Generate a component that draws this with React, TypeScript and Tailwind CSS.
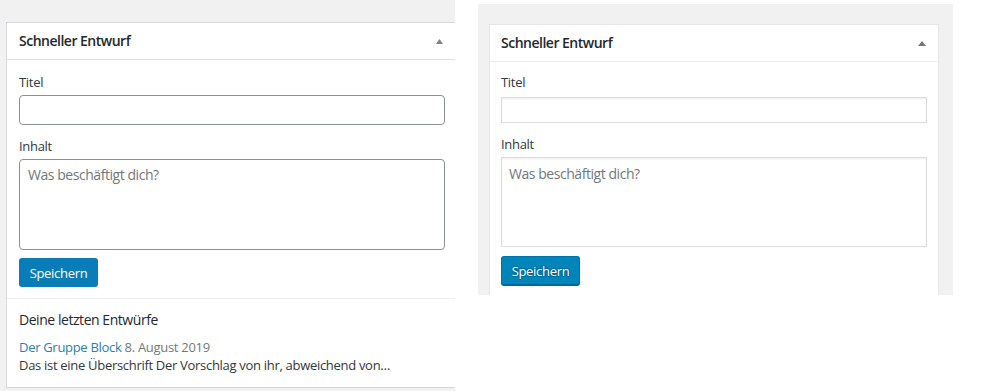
import React from "react";

function Triangle({ w, h, color }: { w: number; h: number; color: string }) {
  return (
    <svg width={w} height={h} viewBox={`0 0 ${w} ${h}`} className="block">
      <polygon points={`0,${h} ${w},${h} ${w / 2},0`} fill={color} />
    </svg>
  );
}

export default function App() {
  return (
    <div className="flex items-start w-[982px] h-[391px] bg-white overflow-hidden font-['Open_Sans',sans-serif]">
      {/* Left: WP 5.3 style */}
      <div className="w-[455px] h-[391px] shrink-0 bg-[#f1f1f1] pt-[22px] pl-[6px] overflow-hidden">
        <div className="w-[452px] h-[366px] bg-white border border-[#d7d9dc]">
          <div className="h-[37px] border-b border-[#dfe1e3] flex items-center justify-between pl-[12px] pr-[14px]">
            <span className="text-[14px] leading-[20px] font-semibold tracking-[-0.5px] text-[#23282d]">
              Schneller Entwurf
            </span>
            <Triangle w={7} h={5} color="#7e8388" />
          </div>
          <div className="px-[12px] pt-[13px] pb-[11px] border-b border-[#eeeeee]">
            <div className="text-[13px] leading-[18px] tracking-[-0.3px] text-[#32373c]">Titel</div>
            <input
              type="text"
              className="mt-[4px] block w-[426px] h-[30px] border border-[#8c9096] rounded-[4px] bg-white px-2 text-[14px] outline-none"
            />
            <div className="mt-[12px] text-[13px] leading-[18px] tracking-[-0.3px] text-[#32373c]">Inhalt</div>
            <textarea
              placeholder="Was beschäftigt dich?"
              className="mt-[4px] block w-[426px] h-[91px] border border-[#8c9096] rounded-[4px] bg-white pl-[8px] pr-2 pt-[5px] text-[14px] leading-[20px] tracking-[-0.45px] text-[#32373c] placeholder:text-[#72777c] resize-none outline-none"
            />
            <button className="mt-[8px] w-[79px] h-[29px] rounded-[3px] bg-[#0a7cb8] text-white text-[13px] leading-[18px] tracking-[-0.3px] flex items-center justify-center">
              Speichern
            </button>
          </div>
          <div className="px-[12px] pt-[11px]">
            <div className="text-[14px] leading-[20px] tracking-[-0.45px] text-[#23282d]">Deine letzten Entwürfe</div>
            <div className="mt-[8px] text-[13px] leading-[18px] tracking-[-0.3px]">
              <span className="text-[#2a80b0]">Der Gruppe Block</span>{" "}
              <span className="text-[#72777c]">8. August 2019</span>
            </div>
            <div className="text-[13px] leading-[18px] tracking-[-0.3px] text-[#32373c]">
              Das ist eine Überschrift Der Vorschlag von ihr, abweichend von…
            </div>
          </div>
        </div>
      </div>

      {/* Right: WP 5.2 style */}
      <div className="ml-[23px] mt-[4px] w-[475px] h-[291px] shrink-0 bg-[#f1f1f1] pt-[20px] pl-[11px] overflow-hidden">
        <div className="w-[450px] h-[400px] bg-white border border-[#e5e5e5]">
          <div className="h-[37px] border-b border-[#eeeeee] flex items-center justify-between pl-[11px] pr-[12px]">
            <span className="text-[14px] leading-[20px] font-semibold tracking-[-0.5px] text-[#23282d]">
              Schneller Entwurf
            </span>
            <Triangle w={8} h={5} color="#72777c" />
          </div>
          <div className="px-[11px] pt-[11px]">
            <div className="text-[13px] leading-[18px] tracking-[-0.3px] text-[#32373c]">Titel</div>
            <input
              type="text"
              className="mt-[6px] block w-[426px] h-[26px] border border-[#dddddd] shadow-[inset_0_1px_2px_rgba(0,0,0,0.07)] bg-white px-2 text-[14px] outline-none"
            />
            <div className="mt-[12px] text-[13px] leading-[18px] tracking-[-0.3px] text-[#32373c]">Inhalt</div>
            <textarea
              placeholder="Was beschäftigt dich?"
              className="mt-[4px] block w-[426px] h-[90px] border border-[#dddddd] shadow-[inset_0_1px_2px_rgba(0,0,0,0.07)] bg-white pl-[7px] pr-2 pt-[6px] text-[14px] leading-[20px] tracking-[-0.45px] text-[#32373c] placeholder:text-[#72777c] resize-none outline-none"
            />
            <button className="mt-[9px] w-[79px] h-[29px] rounded-[3px] bg-[#0085ba] border border-[#0073aa] border-b-[#006799] shadow-[0_1px_0_#006799] text-white text-[13px] leading-[18px] tracking-[-0.3px] flex items-center justify-center [text-shadow:0_-1px_1px_#006799,1px_0_1px_#006799,0_1px_1px_#006799,-1px_0_1px_#006799]">
              Speichern
            </button>
          </div>
        </div>
      </div>
    </div>
  );
}
